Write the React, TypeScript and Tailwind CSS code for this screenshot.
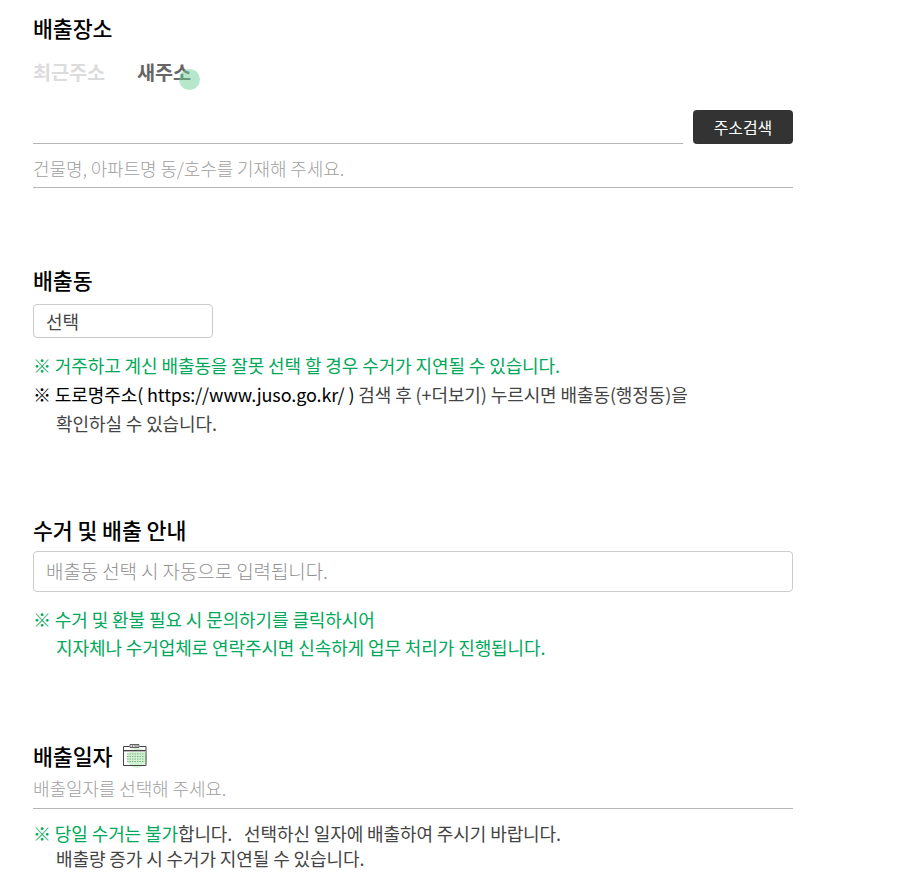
import React from "react";

const font = { fontFamily: '"Noto Sans CJK KR", "Noto Sans", sans-serif' };

const CalendarIcon = () => (
  <svg width="28" height="26" viewBox="0 0 28 26" className="ml-[10px]">
    <circle cx="15" cy="15" r="10" fill="#c6efc8" opacity="0.8" />
    <path d="M1.500 3.500h6M17.500 3.500h6.500v19h-22.500v-19" fill="none" stroke="#444" />
    <path d="M2 7.500h22" stroke="#444" />
    <path d="M2 8.500h22" stroke="#bbb" />
    <path d="M5 11h17M5 13.500h17M5 16h17M5 18.500h17" stroke="#7fae7f" strokeDasharray="1.500 1" />
    <path d="M8 1.500h9v3H8z" fill="#ddd" stroke="#444" strokeWidth="0.8" />
    <path d="M10.500 1.500v3M13 1.500v3M15 1.500v3" stroke="#444" strokeWidth="0.6" />
  </svg>
);

export default function App() {
  return (
    <div className="min-h-screen bg-white pl-[33px] w-[793px] tracking-[-0.1px]" style={font}>
      {/* 배출장소 */}
      <h2 className="pt-[13px] text-[21.7px] leading-[30px] font-medium text-black">배출장소</h2>
      <div className="mt-[14px] flex gap-[32px] text-[19.7px] leading-[30px] font-bold">
        <span className="text-[#dcdcdc]">최근주소</span>
        <span className="relative text-[#666]">
          새주소
          <span className="absolute left-[42px] top-[12px] w-[21px] h-[21px] rounded-full bg-[#6fcf97]/50" />
        </span>
      </div>
      <div className="mt-[23px] flex items-end gap-[10px]">
        <div className="flex-1 h-[34px] border-b border-[#b5b5b5]" />
        <button className="w-[100px] h-[34px] rounded-[4px] bg-[#333] text-white text-[16px]">주소검색</button>
      </div>
      <div className="h-[44px] border-b border-[#b5b5b5] flex items-center text-[18px] text-[#a0a0a0] font-light pt-[5px]">
        건물명, 아파트명 동/호수를 기재해 주세요.
      </div>

      {/* 배출동 */}
      <h2 className="mt-[62px] text-[21.7px] leading-[60px] h-[54px] font-medium text-black">배출동</h2>
      <div className="w-[180px] h-[34px] border border-[#ccc] rounded-[4px] px-[12px] flex items-center text-[18px] text-[#444]">선택</div>
      <div className="mt-[13px] text-[18px] leading-[29px]">
        <p className="text-[#00a85a]">※ 거주하고 계신 배출동을 잘못 선택 할 경우 수거가 지연될 수 있습니다.</p>
        <p className="text-[#444]"><span className="text-black">※ 도로명주소( https://www.juso.go.kr/ )</span> 검색 후 (+더보기) 누르시면 배출동(행정동)을</p>
        <p className="pl-[23px] text-[#444]">확인하실 수 있습니다.</p>
      </div>

      {/* 수거 및 배출 안내 */}
      <h2 className="mt-[77px] text-[21.7px] leading-[30px] font-medium text-black">수거 및 배출 안내</h2>
      <div className="mt-[6px] h-[41px] border border-[#ccc] rounded-[4px] px-[12px] flex items-center text-[19px] text-[#909090] font-light">
        배출동 선택 시 자동으로 입력됩니다.
      </div>
      <div className="mt-[13px] text-[18px] leading-[28px] text-[#00a85a]">
        <p>※ 수거 및 환불 필요 시 문의하기를 클릭하시어</p>
        <p className="pl-[23px]">지자체나 수거업체로 연락주시면 신속하게 업무 처리가 진행됩니다.</p>
      </div>

      {/* 배출일자 */}
      <div className="mt-[79px] flex items-center h-[32px]">
        <h2 className="text-[21.7px] leading-[30px] font-medium text-black">배출일자</h2>
        <CalendarIcon />
      </div>
      <div className="h-[37px] pb-[4px] border-b border-[#b5b5b5] flex items-center text-[18px] text-[#a0a0a0] font-light">배출일자를 선택해 주세요.</div>
      <div className="mt-[12px] text-[18px] leading-[25px] text-[#444]">
        <p><span className="text-[#00a85a]">※ 당일 수거는 불가</span>합니다. &nbsp; 선택하신 일자에 배출하여 주시기 바랍니다.</p>
        <p className="pl-[23px]">배출량 증가 시 수거가 지연될 수 있습니다.</p>
      </div>
    </div>
  );
}
